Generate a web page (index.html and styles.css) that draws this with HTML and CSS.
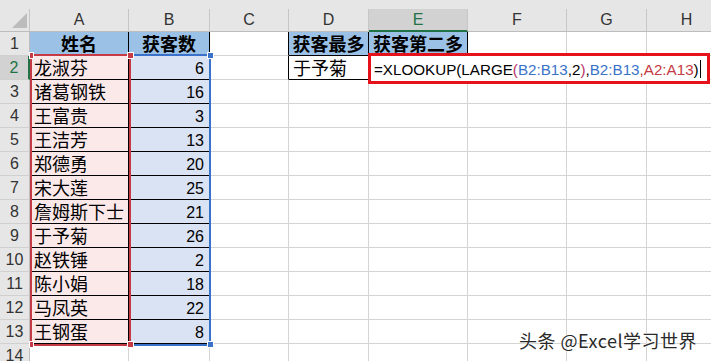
FILE: index.html
```html
<!DOCTYPE html>
<html lang="zh">
<head>
<meta charset="utf-8">
<link rel="stylesheet" href="styles.css">
</head>
<body>
<div class="sheet">
  <div class="grid">
    <div class="topstrip"></div>

    <div class="corner"><span class="tri"></span></div>
    <div class="ch">A</div><div class="ch">B</div><div class="ch">C</div><div class="ch">D</div>
    <div class="ch ch-sel">E</div><div class="ch">F</div><div class="ch">G</div><div class="ch">H</div>

    <div class="rh">1</div>
    <div class="c hd">姓名</div><div class="c hd">获客数</div><div class="c bR"></div>
    <div class="c hd">获客最多</div><div class="c hd">获客第二多</div><div class="c"></div><div class="c"></div><div class="c"></div>

    <div class="rh rh-sel">2</div>
    <div class="c nm">龙淑芬</div><div class="c num">6</div><div class="c bR"></div>
    <div class="c bx">于予菊</div><div class="c"></div><div class="c"></div><div class="c"></div><div class="c"></div>

    <div class="rh">3</div>
    <div class="c nm">诸葛钢铁</div><div class="c num">16</div><div class="c"></div>
    <div class="c"></div><div class="c"></div><div class="c"></div><div class="c"></div><div class="c"></div>

    <div class="rh">4</div>
    <div class="c nm">王富贵</div><div class="c num">3</div><div class="c"></div>
    <div class="c"></div><div class="c"></div><div class="c"></div><div class="c"></div><div class="c"></div>

    <div class="rh">5</div>
    <div class="c nm">王洁芳</div><div class="c num">13</div><div class="c"></div>
    <div class="c"></div><div class="c"></div><div class="c"></div><div class="c"></div><div class="c"></div>

    <div class="rh">6</div>
    <div class="c nm">郑德勇</div><div class="c num">20</div><div class="c"></div>
    <div class="c"></div><div class="c"></div><div class="c"></div><div class="c"></div><div class="c"></div>

    <div class="rh">7</div>
    <div class="c nm">宋大莲</div><div class="c num">25</div><div class="c"></div>
    <div class="c"></div><div class="c"></div><div class="c"></div><div class="c"></div><div class="c"></div>

    <div class="rh">8</div>
    <div class="c nm">詹姆斯下士</div><div class="c num">21</div><div class="c"></div>
    <div class="c"></div><div class="c"></div><div class="c"></div><div class="c"></div><div class="c"></div>

    <div class="rh">9</div>
    <div class="c nm">于予菊</div><div class="c num">26</div><div class="c"></div>
    <div class="c"></div><div class="c"></div><div class="c"></div><div class="c"></div><div class="c"></div>

    <div class="rh">10</div>
    <div class="c nm">赵铁锤</div><div class="c num">2</div><div class="c"></div>
    <div class="c"></div><div class="c"></div><div class="c"></div><div class="c"></div><div class="c"></div>

    <div class="rh">11</div>
    <div class="c nm">陈小娟</div><div class="c num">18</div><div class="c"></div>
    <div class="c"></div><div class="c"></div><div class="c"></div><div class="c"></div><div class="c"></div>

    <div class="rh">12</div>
    <div class="c nm">马凤英</div><div class="c num">22</div><div class="c"></div>
    <div class="c"></div><div class="c"></div><div class="c"></div><div class="c"></div><div class="c"></div>

    <div class="rh">13</div>
    <div class="c nm">王钢蛋</div><div class="c num">8</div><div class="c"></div>
    <div class="c"></div><div class="c"></div><div class="c"></div><div class="c"></div><div class="c"></div>

    <div class="rh">14</div>
    <div class="c"></div><div class="c"></div><div class="c"></div>
    <div class="c"></div><div class="c"></div><div class="c"></div><div class="c"></div><div class="c"></div>
  </div>

  <div class="ref ref-b"><span class="hdl hdl-b hdl-tr"></span><span class="hdl hdl-b hdl-br"></span></div>
  <div class="ref ref-a"><span class="hdl hdl-a hdl-tr"></span><span class="hdl hdl-a hdl-br"></span><span class="hdl hdl-a hdl-tl"></span><span class="hdl hdl-a hdl-bl"></span></div>

  <div class="edit"><span>=XLOOKUP(LARGE</span><span class="p">(</span><span class="bl">B2:B13</span><span>,2</span><span class="p">)</span><span>,</span><span class="bl">B2:B13</span><span class="rd">,A2:A13</span><span>)</span><span class="caret"></span></div>

  <div class="wm">头条 @Excel学习世界</div>
</div>
</body>
</html>
```

FILE: styles.css
```css
html, body {
  margin: 0;
  padding: 0;
  background: #ffffff;
  overflow: hidden;
}

.sheet {
  position: relative;
  width: 711px;
  height: 361px;
  overflow: hidden;
}

.grid {
  display: grid;
  grid-template-columns: 30px 99px 81px 79px 80px 99px 99px 80px 80px;
  grid-template-rows: 9px 23px repeat(14, 24px);
  width: 727px;
}

.topstrip {
  grid-column: 1 / -1;
  background: #e6e6e6;
}

.corner {
  position: relative;
  background: #e6e6e6;
  border-right: 1px solid #c6c6c6;
  border-bottom: 1px solid #bdbdbd;
  box-sizing: border-box;
}
.tri {
  position: absolute;
  left: 12px;
  top: 4px;
  width: 0;
  height: 0;
  border-left: 15px solid transparent;
  border-bottom: 15px solid #bcbcbc;
}

.ch {
  background: #e6e6e6;
  border-right: 1px solid #c6c6c6;
  border-bottom: 1px solid #bdbdbd;
  box-sizing: border-box;
  font-family: "Liberation Sans", Arial, sans-serif;
  font-size: 16px;
  color: #333;
  text-align: center;
  line-height: 21px;
}
.ch-sel {
  background: #d2d2d2;
  color: #217346;
  border-bottom: 2px solid #217346;
}

.rh {
  background: #e6e6e6;
  border-right: 1px solid #bdbdbd;
  border-bottom: 1px solid #d0d0d0;
  box-sizing: border-box;
  font-family: "Liberation Sans", Arial, sans-serif;
  font-size: 16px;
  color: #333;
  text-align: center;
  line-height: 24px;
}
.rh-sel {
  background: #d2d2d2;
  color: #217346;
  border-right: 2px solid #217346;
}

.c {
  border-right: 1px solid #d4d4d4;
  border-bottom: 1px solid #d4d4d4;
  box-sizing: border-box;
  font-family: "Noto Sans CJK SC", "Liberation Sans", sans-serif;
  font-size: 18px;
  line-height: 23px;
  color: #000;
  padding: 0 4px;
  white-space: nowrap;
}

.bR { border-right-color: #000; }

.hd {
  background: #9bc2e6;
  font-weight: 700;
  text-align: center;
  padding: 0;
  border-right-color: #000;
  border-bottom-color: #000;
}

.bx {
  border-right-color: #000;
  border-bottom-color: #000;
}

.nm {
  background: #fbe8e8;
  border-right-color: #000;
  border-bottom-color: #000;
}

.num {
  background: #dae3f3;
  border-right-color: #000;
  border-bottom-color: #000;
  text-align: right;
  font-family: "Liberation Sans", Arial, sans-serif;
  font-size: 16px;
  line-height: 25px;
  padding-right: 5px;
}

/* reference range highlights */
.ref {
  position: absolute;
  box-sizing: border-box;
}
.ref-a {
  left: 30px;
  top: 54px;
  width: 101px;
  height: 292px;
  border: 2px solid #c63a45;
}
.ref-b {
  left: 129px;
  top: 54px;
  width: 82px;
  height: 292px;
  border: 2px solid #3a72c9;
}
.hdl {
  position: absolute;
  width: 5px;
  height: 5px;
  border: 1px solid #fff;
}
.hdl-a { background: #c63a45; }
.hdl-b { background: #3a72c9; }
.hdl-tr { right: -5px; top: -4px; }
.hdl-br { right: -5px; bottom: -4px; }
.hdl-tl { left: -3px; top: -4px; width: 3px; }
.hdl-bl { left: -3px; bottom: -4px; width: 3px; }

/* in-cell editor */
.edit {
  position: absolute;
  left: 368px;
  top: 53px;
  width: 342px;
  height: 31px;
  box-sizing: border-box;
  border: 3px solid #e5121c;
  background: #fff;
  padding: 2px 0 0 3px;
  font-family: "Liberation Sans", Arial, sans-serif;
  font-size: 15.2px;
  line-height: 24px;
  color: #000;
  white-space: nowrap;
}
.edit .p { color: #b8346a; }
.edit .bl { color: #3a72c9; }
.edit .rd { color: #c63a45; }
.caret {
  display: inline-block;
  width: 1px;
  height: 18px;
  background: #000;
  vertical-align: -3px;
  margin-left: 1px;
}

.wm {
  position: absolute;
  left: 519px;
  top: 328px;
  font-family: "Noto Sans CJK SC", "Liberation Sans", sans-serif;
  font-size: 18px;
  letter-spacing: 0.5px;
  line-height: 24px;
  color: #2a2a2a;
  text-shadow: 0 0 2px #fff, 0 0 2px #fff, 0 0 1px #fff;
  white-space: nowrap;
}
```
